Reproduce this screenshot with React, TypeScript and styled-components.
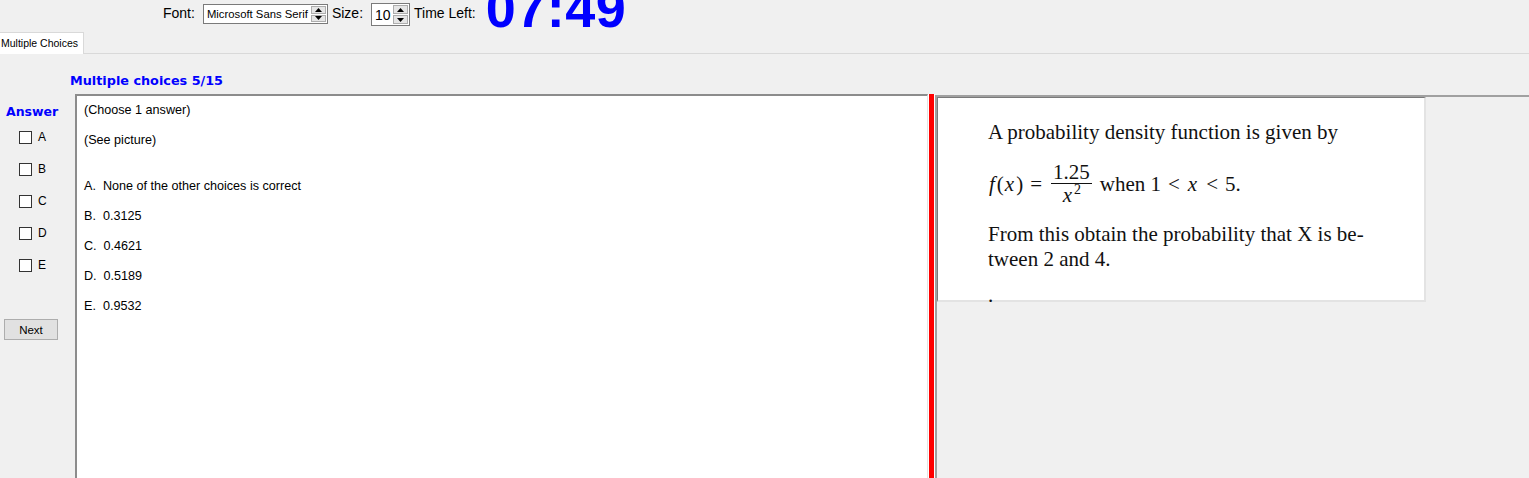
import React from 'react';
import styled, { createGlobalStyle } from 'styled-components';

const GlobalStyle = createGlobalStyle`
  html, body {
    margin: 0;
    padding: 0;
    background: #f0f0f0;
  }
  * {
    box-sizing: border-box;
  }
`;

const Window = styled.div`
  width: 1529px;
  height: 478px;
  overflow: hidden;
  display: flex;
  flex-direction: column;
  background: #f0f0f0;
  font-family: "Liberation Sans", Arial, sans-serif;
  color: #000;
`;

/* top toolbar with font / size / timer */
const TopBar = styled.div`
  height: 32px;
  flex: none;
  display: flex;
  align-items: flex-start;
  padding-left: 159px;
`;

const Label = styled.span`
  font-size: 14px;
  line-height: 16px;
  margin: 5px 8px 0 4px;
  white-space: nowrap;
`;

const SpinBox = styled.div<{ $width: number; $height: number; $top: number }>`
  width: ${({ $width }) => $width}px;
  height: ${({ $height }) => $height}px;
  margin-top: ${({ $top }) => $top}px;
  background: #fff;
  border: 1px solid #7a7a7a;
  display: flex;
  align-items: center;
  padding: 1px;
`;

const SpinText = styled.span<{ $size: number }>`
  flex: 1;
  min-width: 0;
  font-size: ${({ $size }) => $size}px;
  padding-left: 2px;
  white-space: nowrap;
  overflow: hidden;
`;

const Spinner = styled.div`
  width: 15px;
  flex: none;
  align-self: stretch;
  display: flex;
  flex-direction: column;
  gap: 1px;
`;

const SpinButton = styled.div`
  flex: 1;
  background: #e5e5e5;
  border: 1px solid #adadad;
  display: flex;
  align-items: center;
  justify-content: center;
`;

const Timer = styled.div`
  font-size: 54px;
  line-height: 54px;
  font-weight: bold;
  color: #0000ff;
  margin: -19px 0 0 2px;
  letter-spacing: 0.5px;
`;

/* tab strip */
const TabStrip = styled.div`
  height: 22px;
  flex: none;
  border-bottom: 1px solid #d9d9d9;
  display: flex;
`;

const Tab = styled.div`
  width: 84px;
  height: 22px;
  background: #fff;
  border-top: 1px solid #d9d9d9;
  border-right: 1px solid #d9d9d9;
  font-size: 10.5px;
  line-height: 20px;
  padding-left: 1px;
  white-space: nowrap;
`;

const TabPage = styled.div`
  flex: 1;
  min-height: 0;
  display: flex;
  flex-direction: column;
  padding-top: 19px;
`;

const Title = styled.div`
  font-family: "DejaVu Sans", Verdana, sans-serif;
  font-weight: bold;
  font-size: 12.8px;
  line-height: 16px;
  color: #0000ff;
  margin-left: 70px;
`;

const Body = styled.div`
  flex: 1;
  min-height: 0;
  display: flex;
  margin-top: 5px;
`;

/* answer column */
const AnswerColumn = styled.div`
  width: 75px;
  flex: none;
  display: flex;
  flex-direction: column;
`;

const AnswerHeading = styled.div`
  font-family: "DejaVu Sans", Verdana, sans-serif;
  font-weight: bold;
  font-size: 12.5px;
  line-height: 16px;
  color: #0000ff;
  margin: 10px 0 1px 6px;
`;

const CheckRow = styled.label`
  height: 32px;
  display: flex;
  align-items: center;
  padding-left: 19px;
  font-size: 12px;
`;

const CheckBox = styled.span`
  width: 13px;
  height: 13px;
  border: 1px solid #333;
  background: #fff;
  margin-right: 6px;
`;

const NextButton = styled.button`
  width: 54px;
  height: 21px;
  margin: 38px 0 0 4px;
  padding: 0;
  background: #e1e1e1;
  border: 1px solid #adadad;
  font-family: "Liberation Sans", Arial, sans-serif;
  font-size: 11.5px;
  color: #000;
`;

/* question text box */
const QuestionBox = styled.div`
  width: 853px;
  flex: none;
  background: #fff;
  border-top: 2px solid #8c8c8c;
  border-left: 2px solid #8c8c8c;
  border-right: 1px solid #e3e3e3;
  padding: 3px 0 0 7px;
`;

const QuestionLine = styled.div<{ $extra?: number }>`
  font-size: 12.6px;
  line-height: 22px;
  margin-top: ${({ $extra }) => $extra ?? 0}px;
  margin-bottom: 8px;
  white-space: pre;
`;

const Splitter = styled.div`
  width: 7px;
  flex: none;
  background: #ff0000;
  border-left: 1px solid #fff;
  border-right: 1px solid #fff;
`;

/* picture area */
const PicturePanel = styled.div`
  flex: 1;
  border-top: 2px solid #a0a0a0;
  border-left: 2px solid #a0a0a0;
  background: #f0f0f0;
  margin-top: 1px;
`;

const PictureBox = styled.div`
  width: 489px;
  height: 205px;
  background: #fff;
  border-top: 1px solid #7a7a7a;
  border-left: 1px solid #7a7a7a;
  border-right: 2px solid #e3e3e3;
  border-bottom: 2px solid #e3e3e3;
  padding: 22px 0 0 50px;
  font-family: "Liberation Serif", "Times New Roman", serif;
  font-size: 21px;
  line-height: 25px;
  color: #111;
`;

const MathLine = styled.div<{ $top?: number }>`
  white-space: nowrap;
  margin-top: ${({ $top }) => $top ?? 0}px;
`;

const FormulaRow = styled.div`
  display: flex;
  align-items: center;
  margin-top: 17px;
  white-space: nowrap;
`;

const Var = styled.i`
  font-style: italic;
  padding: 0 2px 0 1px;
`;

const Rel = styled.span`
  margin: 0 7px;
`;

const Fraction = styled.span`
  display: inline-flex;
  flex-direction: column;
  align-items: center;
  margin: 0 8px 0 2px;
`;

const Numer = styled.span`
  line-height: 21px;
  padding: 0 2px;
  border-bottom: 1px solid #111;
`;

const Denom = styled.span`
  line-height: 23px;
`;

const Sup = styled.sup`
  font-size: 14px;
  line-height: 0;
`;

const Arrow = ({ up }: { up: boolean }) => (
  <svg width="7" height="4" viewBox="0 0 7 4">
    <path d={up ? 'M0 4 L3.5 0 L7 4 Z' : 'M0 0 L3.5 4 L7 0 Z'} fill="#000" />
  </svg>
);

const Spin = () => (
  <Spinner>
    <SpinButton><Arrow up /></SpinButton>
    <SpinButton><Arrow up={false} /></SpinButton>
  </Spinner>
);

const choices = ['A', 'B', 'C', 'D', 'E'];

const options = [
  'A.  None of the other choices is correct',
  'B.  0.3125',
  'C.  0.4621',
  'D.  0.5189',
  'E.  0.9532',
];

const App: React.FC = () => {
  return (
    <>
      <GlobalStyle />
      <Window>
        <TopBar>
          <Label>Font:</Label>
          <SpinBox $width={125} $height={20} $top={4}>
            <SpinText $size={11.3}>Microsoft Sans Serif</SpinText>
            <Spin />
          </SpinBox>
          <Label>Size:</Label>
          <SpinBox $width={39} $height={23} $top={3}>
            <SpinText $size={14}>10</SpinText>
            <Spin />
          </SpinBox>
          <Label>Time Left:</Label>
          <Timer>07:49</Timer>
        </TopBar>

        <TabStrip>
          <Tab>Multiple Choices</Tab>
        </TabStrip>

        <TabPage>
          <Title>Multiple choices 5/15</Title>
          <Body>
            <AnswerColumn>
              <AnswerHeading>Answer</AnswerHeading>
              {choices.map((c) => (
                <CheckRow key={c}>
                  <CheckBox />
                  {c}
                </CheckRow>
              ))}
              <NextButton>Next</NextButton>
            </AnswerColumn>

            <QuestionBox>
              <QuestionLine>(Choose 1 answer)</QuestionLine>
              <QuestionLine>(See picture)</QuestionLine>
              {options.map((o, i) => (
                <QuestionLine key={o} $extra={i === 0 ? 24 : 0}>{o}</QuestionLine>
              ))}
            </QuestionBox>

            <Splitter />

            <PicturePanel>
              <PictureBox>
                <MathLine>A probability density function is given by</MathLine>
                <FormulaRow>
                  <span><Var>f</Var>(<Var>x</Var>)</span>
                  <Rel>=</Rel>
                  <Fraction>
                    <Numer>1.25</Numer>
                    <Denom><Var>x</Var><Sup>2</Sup></Denom>
                  </Fraction>
                  <span>when 1</span>
                  <Rel>&lt;</Rel>
                  <Var>x</Var>
                  <Rel>&lt;</Rel>
                  <span>5.</span>
                </FormulaRow>
                <MathLine $top={15}>From this obtain the probability that X is be-</MathLine>
                <MathLine>tween 2 and 4.</MathLine>
                <MathLine $top={11}>.</MathLine>
              </PictureBox>
            </PicturePanel>
          </Body>
        </TabPage>
      </Window>
    </>
  );
};

export default App;
